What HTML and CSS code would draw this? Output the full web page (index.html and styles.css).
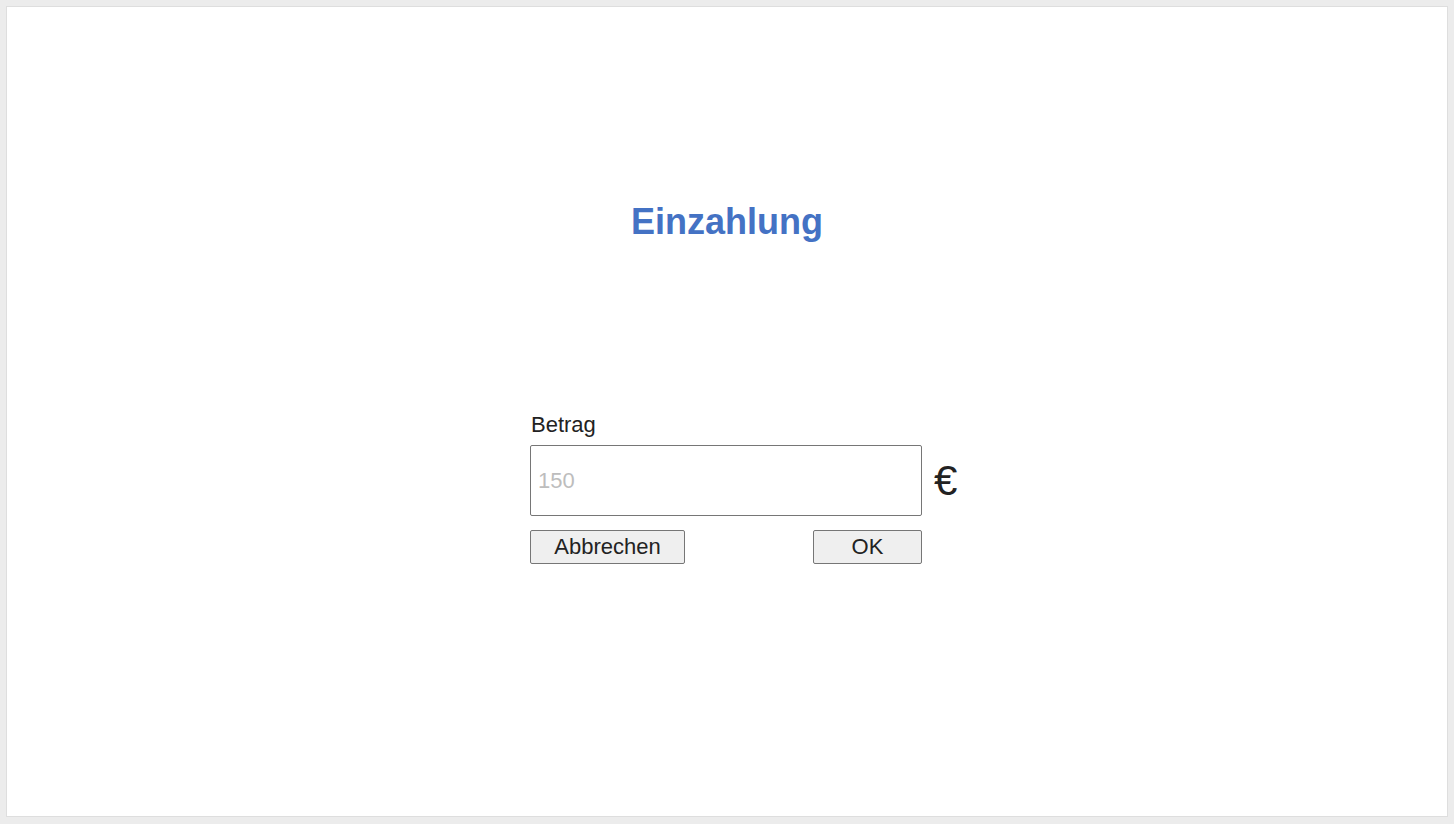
FILE: index.html
```html
<!DOCTYPE html>
<html lang="de">
<head>
<meta charset="utf-8">
<title>Einzahlung</title>
<link rel="stylesheet" href="styles.css">
</head>
<body>
<main class="panel">
  <h1 class="title">Einzahlung</h1>
  <form class="form">
    <label class="label" for="betrag">Betrag</label>
    <div class="amount-row">
      <input id="betrag" class="amount" type="text" placeholder="150">
      <span class="currency">€</span>
    </div>
    <div class="actions">
      <button type="button" class="btn btn-cancel">Abbrechen</button>
      <button type="button" class="btn btn-ok">OK</button>
    </div>
  </form>
</main>
</body>
</html>
```

FILE: styles.css
```css
html, body {
  margin: 0;
  padding: 0;
  height: 100%;
}

body {
  background: #ececec;
  padding: 6px;
  box-sizing: border-box;
  font-family: "Liberation Sans", Arial, sans-serif;
  color: #222;
}

.panel {
  box-sizing: border-box;
  height: 811px;
  background: #fff;
  border: 1px solid #dedede;
  padding-top: 194px;
  padding-right: 2px;
}

.title {
  margin: 0 0 0 2px;
  text-align: center;
  font-size: 36px;
  line-height: 41px;
  font-weight: bold;
  color: #4472c4;
}

.form {
  width: 392px;
  margin: 170px auto 0;
}

.label {
  display: block;
  font-size: 22px;
  line-height: 25px;
  margin-bottom: 8px;
  padding-left: 1px;
  color: #222;
}

.amount-row {
  display: flex;
  align-items: center;
}

.amount {
  flex: 0 0 auto;
  box-sizing: border-box;
  width: 392px;
  height: 71px;
  margin: 0;
  padding: 0 7px;
  border: 1px solid #767676;
  border-radius: 2px;
  font-family: "Liberation Sans", Arial, sans-serif;
  font-size: 22px;
  color: #222;
  background: #fff;
  outline: none;
}

.amount::placeholder {
  color: #bdbdbd;
}

.currency {
  flex: 0 0 auto;
  margin-left: 12px;
  font-size: 42px;
  line-height: 48px;
  color: #222;
}

.actions {
  display: flex;
  justify-content: space-between;
  margin-top: 14px;
}

.btn {
  box-sizing: border-box;
  height: 34px;
  margin: 0;
  padding: 0;
  border: 1px solid #767676;
  border-radius: 2px;
  background: #efefef;
  font-family: "Liberation Sans", Arial, sans-serif;
  font-size: 22px;
  line-height: 30px;
  color: #222;
}

.btn-cancel {
  width: 155px;
}

.btn-ok {
  width: 109px;
}
```
